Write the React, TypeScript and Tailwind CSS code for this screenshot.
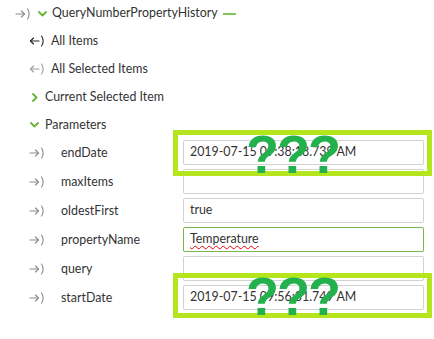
import React from 'react';

const ArrowParen = ({ dir = 'right', color = '#8a8a8a' }: { dir?: 'left' | 'right'; color?: string }) => (
  <svg width="16" height="12" viewBox="0 0 16 12" fill="none" stroke={color} strokeWidth="1.1" strokeLinecap="round" strokeLinejoin="round">
    {dir === 'right' ? (
      <>
        <path d="M1 6h8.5" />
        <path d="M6.5 3l3 3-3 3" />
      </>
    ) : (
      <>
        <path d="M1.5 6H10" />
        <path d="M4.5 3l-3 3 3 3" />
      </>
    )}
    <path d="M12.5 1c2.2 2.8 2.2 7.2 0 10" />
  </svg>
);

const ChevronDown = () => (
  <svg width="9" height="6" viewBox="0 0 9 6" fill="none" stroke="#6bb237" strokeWidth="1.8" strokeLinecap="round" strokeLinejoin="round">
    <path d="M1 1l3.5 3.5L8 1" />
  </svg>
);

const ChevronRight = () => (
  <svg width="6" height="9" viewBox="0 0 6 9" fill="none" stroke="#6bb237" strokeWidth="1.8" strokeLinecap="round" strokeLinejoin="round">
    <path d="M1 1l3.5 3.5L1 8" />
  </svg>
);

const params = [
  { name: 'endDate', value: '2019-07-15 09:38:18.739 AM' },
  { name: 'maxItems', value: '' },
  { name: 'oldestFirst', value: 'true' },
  { name: 'propertyName', value: 'Temperature', active: true },
  { name: 'query', value: '' },
  { name: 'startDate', value: '2019-07-15 09:56:31.749 AM' },
];

export default function App() {
  return (
    <div className="relative w-[434px] h-[339px] bg-white overflow-hidden text-[12.4px] text-[#333]" style={{ fontFamily: '"Segoe UI", Lato, sans-serif' }}>
      <div className="flex flex-col">
        <div className="flex items-center h-[27px] pl-[15px]">
          <ArrowParen />
          <span className="ml-[7px]"><ChevronDown /></span>
          <span className="ml-[5px]">QueryNumberPropertyHistory</span>
          <span className="ml-[5px] w-[13px] h-[2px] bg-[#84c35e]" />
        </div>
        <div className="flex items-center h-7 pl-[29px]">
          <ArrowParen dir="left" color="#222" />
          <span className="ml-[6px]">All Items</span>
        </div>
        <div className="flex items-center h-7 pl-[29px]">
          <ArrowParen dir="left" color="#9a9a9a" />
          <span className="ml-[6px]">All Selected Items</span>
        </div>
        <div className="flex items-center h-7 pl-[32px]">
          <ChevronRight />
          <span className="ml-[7px]">Current Selected Item</span>
        </div>
        <div className="flex items-center h-7 pl-[30px]">
          <ChevronDown />
          <span className="ml-[6px]">Parameters</span>
        </div>
        <div className="flex flex-col gap-1 mt-px">
          {params.map((p) => (
            <div key={p.name} className="flex items-center h-[25px] pl-[29px]">
              <ArrowParen />
              <span className="ml-[16px] w-[122px] pt-[2px]">{p.name}</span>
              {p.active ? (
                <div className="w-[241px] h-[25px] rounded-[2px] shadow-[inset_0_0_0_1px_#7ab648] flex items-center px-[7px] whitespace-nowrap overflow-hidden">
                  <span className="underline decoration-wavy decoration-red-600 decoration-1 underline-offset-2">{p.value}</span>
                </div>
              ) : (
                <div className="w-[241px] h-[25px] rounded-[2px] shadow-[inset_0_0_0_1px_#d2d2d2] flex items-center px-[7px] whitespace-nowrap overflow-hidden">
                  {p.value}
                </div>
              )}
            </div>
          ))}
        </div>
      </div>

      <div className="absolute left-[173px] top-[130px] w-[259px] h-[46px] border-[5px] border-[#b5e61d]" />
      <div className="absolute left-[173px] top-[273px] w-[259px] h-[45px] border-[5px] border-[#b5e61d]" />

      <div
        className="absolute left-[246px] top-[127px] text-[54px] leading-none font-bold tracking-[-2px] text-[#22b14c]"
        style={{ fontFamily: '"Liberation Sans", Arial, sans-serif' }}
      >
        ???
      </div>
      <div
        className="absolute left-[246px] top-[269px] text-[54px] leading-none font-bold tracking-[-2px] text-[#22b14c]"
        style={{ fontFamily: '"Liberation Sans", Arial, sans-serif' }}
      >
        ???
      </div>
    </div>
  );
}
